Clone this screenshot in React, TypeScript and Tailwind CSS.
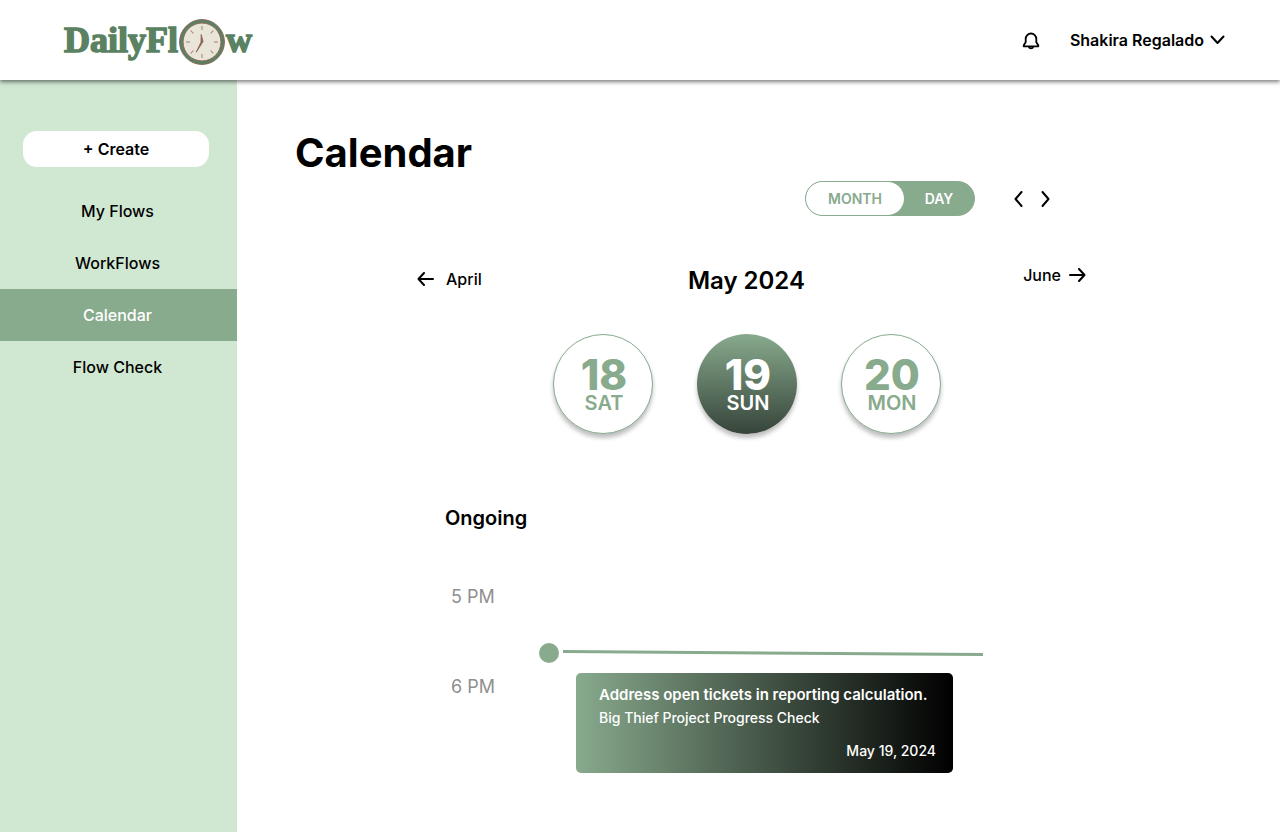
import React from "react";

const navItems = [
  { label: "My Flows", active: false },
  { label: "WorkFlows", active: false },
  { label: "Calendar", active: true },
  { label: "Flow Check", active: false },
];

const days = [
  { date: "18", name: "SAT", selected: false },
  { date: "19", name: "SUN", selected: true },
  { date: "20", name: "MON", selected: false },
];

function ClockFace() {
  return (
    <svg viewBox="0 0 46 46" className="size-[46px] shrink-0" aria-hidden="true">
      <circle cx="23" cy="23" r="22.4" fill="#5a8262" stroke="#8a6258" strokeWidth="1" />
      <circle cx="23" cy="23" r="19" fill="#e9e5d8" stroke="#8a6258" strokeWidth="1" />
      <g stroke="#a58079" strokeWidth="1">
        {[0, 45, 90, 135, 180, 225, 270, 315].map((angle) => (
          <path key={angle} d="M23 7v4" transform={`rotate(${angle} 23 23)`} />
        ))}
      </g>
      <path d="M22.2 15.5 24 22.6 17.2 33.2 22 23.2Z" fill="#8a6258" stroke="#8a6258" strokeWidth="0.9" strokeLinejoin="round" />
    </svg>
  );
}

function Logo() {
  return (
    <a
      href="#"
      aria-label="DailyFlow"
      className="flex items-center gap-px pt-[3px] font-['Liberation_Serif',serif] text-4xl leading-10 font-bold text-[#5a8262] [-webkit-text-stroke:1.5px_#5a8262]"
    >
      <span className="pb-1">DailyFl</span>
      <ClockFace />
      <span className="pb-1">w</span>
    </a>
  );
}

function BellIcon() {
  return (
    <svg viewBox="0 0 18 20" className="h-5 w-[18px]" fill="none" stroke="currentColor" strokeWidth="1.8" strokeLinejoin="round" strokeLinecap="round" aria-hidden="true">
      <path d="M9 2.500A5.300 5.300 0 0 0 3.700 7.800V11.200L1.700 14.200V15.300H16.300V14.200L14.300 11.200V7.800A5.300 5.300 0 0 0 9 2.500Z" />
      <path d="M6.800 15.800a2.300 2.300 0 0 0 4.400 0" />
    </svg>
  );
}

function Stroke({ d, box, className }: { d: string; box: string; className: string }) {
  return (
    <svg viewBox={box} className={className} fill="none" stroke="currentColor" strokeWidth="2" strokeLinecap="round" strokeLinejoin="round" aria-hidden="true">
      <path d={d} />
    </svg>
  );
}

function Header() {
  return (
    <header className="relative z-10 flex h-20 items-center justify-between bg-white pr-[55px] pl-16 shadow-[0_2px_4px_rgba(0,0,0,0.5)]">
      <Logo />
      <div className="flex items-center gap-[30px]">
        <button type="button" aria-label="Notifications" className="pt-0.5">
          <BellIcon />
        </button>
        <button type="button" className="flex items-center gap-1.5 text-base font-semibold">
          Shakira Regalado
          <Stroke box="0 0 15 10" className="h-2.5 w-[15px]" d="M1.5 1.5 7.5 8 13.5 1.5" />
        </button>
      </div>
    </header>
  );
}

function Sidebar() {
  return (
    <aside className="w-[237px] shrink-0 bg-[#d0e8d2] pt-[51px]">
      <div className="pr-7 pl-[23px]">
        <button type="button" className="h-9 w-full rounded-[14px] bg-white text-base font-semibold">
          + Create
        </button>
      </div>
      <nav className="mt-[18px]">
        <ul>
          {navItems.map((item) => (
            <li key={item.label}>
              <a
                href="#"
                aria-current={item.active ? "page" : undefined}
                className={
                  item.active
                    ? "flex h-[52px] items-center justify-center bg-[#88aa8d] pr-0.5 font-medium text-white"
                    : "flex h-[52px] items-center justify-center pr-0.5 font-medium"
                }
              >
                {item.label}
              </a>
            </li>
          ))}
        </ul>
      </nav>
    </aside>
  );
}

function ViewControls() {
  return (
    <div className="mt-1 flex items-center justify-end gap-[39px] pr-[230px]">
      <div className="flex h-[35px] w-[170px] rounded-full border border-[#88aa8d] bg-[#88aa8d] text-sm font-semibold">
        <button type="button" className="w-[98px] rounded-full bg-white text-[#88aa8d]">
          MONTH
        </button>
        <button type="button" aria-pressed="true" className="flex-1 text-white">
          DAY
        </button>
      </div>
      <div className="flex gap-[18px]">
        <button type="button" aria-label="Previous day">
          <Stroke box="0 0 9 18" className="h-[18px] w-[9px]" d="M7.5 2 1.5 9 7.5 16" />
        </button>
        <button type="button" aria-label="Next day">
          <Stroke box="0 0 9 18" className="h-[18px] w-[9px]" d="M1.5 2 7.5 9 1.5 16" />
        </button>
      </div>
    </div>
  );
}

function MonthNav() {
  return (
    <div className="flex items-start justify-between">
      <button type="button" className="flex items-center gap-3 self-center pb-1 leading-5 font-medium">
        <Stroke box="0 0 17 14" className="h-3.5 w-[17px]" d="M16 7H1.5M7 1 1.5 7 7 13" />
        April
      </button>
      <h2 className="pr-3 text-2xl leading-8 font-semibold">May 2024</h2>
      <button type="button" className="flex items-center gap-2 leading-5 font-medium">
        June
        <Stroke box="0 0 17 14" className="h-3.5 w-[17px]" d="M1 7h14.5M10 1l5.5 6L10 13" />
      </button>
    </div>
  );
}

function DayPicker() {
  return (
    <div className="mt-[37px] flex justify-center gap-11 pr-2.5">
      {days.map((day) => (
        <button
          key={day.date}
          type="button"
          aria-pressed={day.selected}
          className={
            day.selected
              ? "flex size-[100px] flex-col items-center justify-center rounded-full bg-linear-to-b/srgb from-[#88aa8d] to-[#36443a] pl-[3px] text-white shadow-[0_4px_4px_rgba(0,0,0,0.25)]"
              : "flex size-[100px] flex-col items-center justify-center rounded-full border border-[#88aa8d] bg-white pl-[3px] text-[#88aa8d] shadow-[0_4px_4px_rgba(0,0,0,0.25)]"
          }
        >
          <span className="pt-1.5 text-[42px] leading-8 font-extrabold">{day.date}</span>
          <span className="text-xl leading-6 font-semibold">{day.name}</span>
        </button>
      ))}
    </div>
  );
}

function Timeline() {
  return (
    <section>
      <h3 className="mt-[70px] pl-7 text-xl leading-7 font-semibold">Ongoing</h3>
      <div className="mt-[53px] flex">
        <div className="flex w-[122px] shrink-0 flex-col gap-[66px] pl-[34px] text-lg leading-6 text-[#8f8f8f]">
          <span>5 PM</span>
          <span>6 PM</span>
        </div>
        <div className="min-w-0 flex-1 pt-[58px]">
          <div className="flex items-center gap-1 pr-[103px]">
            <span className="size-5 shrink-0 rounded-full bg-[#88aa8d]" />
            <svg viewBox="0 0 420 8" preserveAspectRatio="none" className="h-2 w-full" aria-hidden="true">
              <path d="M0 2.5 420 5.5" stroke="#88aa8d" strokeWidth="3" />
            </svg>
          </div>
          <article className="mt-2.5 mr-[133px] ml-[37px] rounded-[5px] bg-linear-to-r/srgb from-[#88aa8d] to-black pt-3 pr-[17px] pb-3 pl-[23px] text-sm leading-5 font-medium text-white">
            <h4 className="text-[15px] leading-5 font-semibold">Address open tickets in reporting calculation.</h4>
            <p className="mt-[3px]">Big Thief Project Progress Check</p>
            <p className="mt-[13px] text-right">May 19, 2024</p>
          </article>
        </div>
      </div>
    </section>
  );
}

export default function App() {
  return (
    <div className="flex min-h-screen flex-col bg-white font-['Inter',sans-serif] text-base text-black">
      <Header />
      <div className="flex flex-1">
        <Sidebar />
        <main className="min-w-0 flex-1 pt-[49px] pb-14">
          <h1 className="pl-[58px] text-[40px] leading-12 font-bold">Calendar</h1>
          <ViewControls />
          <div className="mt-[49px] pr-[194px] pl-[180px]">
            <MonthNav />
            <DayPicker />
            <Timeline />
          </div>
        </main>
      </div>
    </div>
  );
}
